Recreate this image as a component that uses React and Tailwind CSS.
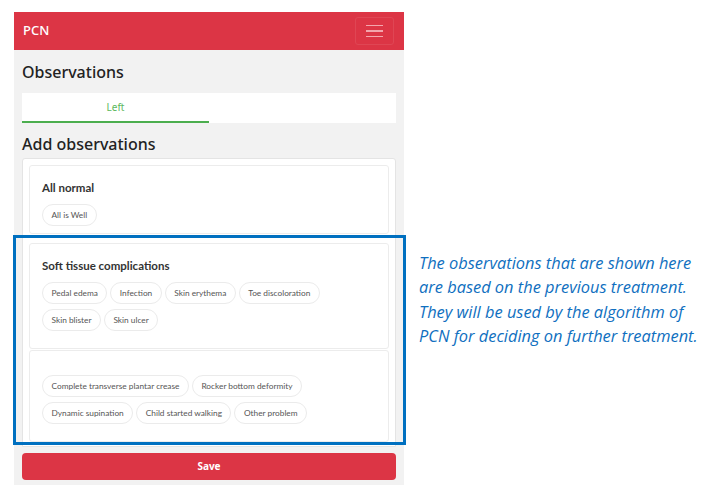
import { useState } from "react";

const groups = [
  { title: "All normal", items: ["All is Well"] },
  {
    title: "Soft tissue complications",
    items: [
      "Pedal edema",
      "Infection",
      "Skin erythema",
      "Toe discoloration",
      "Skin blister",
      "Skin ulcer",
    ],
  },
  {
    title: "",
    items: [
      "Complete transverse plantar crease",
      "Rocker bottom deformity",
      "Dynamic supination",
      "Child started walking",
      "Other problem",
    ],
  },
];

function Chip({ label, selected, onClick }) {
  return (
    <button
      onClick={onClick}
      className={`h-[22px] px-[8.5px] rounded-full border text-[8.3px] leading-none ${
        selected
          ? "border-[#dc3545] text-[#dc3545]"
          : "border-[#ebebeb] text-[#555]"
      }`}
    >
      {label}
    </button>
  );
}

function App() {
  const [picked, setPicked] = useState([]);

  const toggle = (item) => {
    setPicked((prev) =>
      prev.includes(item) ? prev.filter((p) => p !== item) : [...prev, item]
    );
  };

  return (
    <div
      className="relative w-[726px] h-[494px] bg-white flex"
      style={{ fontFamily: '"Noto Sans", "Open Sans", sans-serif' }}
    >
      {/* Phone screen */}
      <div className="ml-[14px] mt-[12px] w-[390px] h-[473px] bg-[#f2f2f2] flex flex-col">
        <header className="h-[38px] bg-[#dc3545] flex items-center justify-between pl-[9px] pr-[10px]">
          <span className="text-white text-[13px] font-medium">PCN</span>
          <button className="w-[39px] h-[28px] border border-[#df4654] rounded-[3px] flex flex-col items-center justify-center gap-[4px]">
            <span className="block w-[17px] h-[1.5px] bg-[#f3a6ad]" />
            <span className="block w-[17px] h-[1.5px] bg-[#f3a6ad]" />
            <span className="block w-[17px] h-[1.5px] bg-[#f3a6ad]" />
          </button>
        </header>

        <div className="flex-1 flex flex-col px-[8px]">
          <h2 className="mt-[11px] h-[22px] leading-[22px] text-[16px] font-medium text-[#222]">
            Observations
          </h2>

          <div className="mt-[10px] h-[30px] bg-white flex">
            <button className="w-1/2 h-full border-b-2 border-[#4cae4f] text-[10px] text-[#5cb85c]">
              Left
            </button>
          </div>

          <h2 className="mt-[10px] h-[22px] leading-[22px] text-[16px] font-medium text-[#222]">
            Add observations
          </h2>

          <div
            className="mt-[3px] h-[289px] overflow-hidden bg-white border border-[#e4e4e4] rounded-t-[3px] px-[6px] pt-[6px]"
            style={{ fontFamily: "Lato, sans-serif" }}
          >
            {groups.map((g, i) => (
              <div
                key={i}
                className={`border border-[#ececec] rounded-[3px] px-[12px] ${
                  i === 0
                    ? "pt-[14px] pb-[7px] mb-[9px]"
                    : g.title
                    ? "pt-[14px] pb-[17px] mb-[1px]"
                    : "pt-[24px] pb-[17px]"
                }`}
              >
                {g.title && (
                  <div className="h-[15px] mb-[9px] leading-[15px] text-[11.5px] font-bold text-[#333]">
                    {g.title}
                  </div>
                )}
                <div className="flex flex-wrap gap-x-[3px] gap-y-[5px]">
                  {g.items.map((item) => (
                    <Chip
                      key={item}
                      label={item}
                      selected={picked.includes(item)}
                      onClick={() => toggle(item)}
                    />
                  ))}
                </div>
              </div>
            ))}
          </div>

          <button className="mt-[6px] h-[27px] rounded-[4px] bg-[#dc3545] text-white text-[10px] font-bold">
            Save
          </button>
        </div>
      </div>

      {/* Note */}
      <p
        className="ml-[15px] mt-[251px] text-[16.4px] leading-[24.4px] italic text-[#0f6fc0]"
        style={{ fontFamily: '"Open Sans", sans-serif' }}
      >
        The observations that are shown here
        <br />
        are based on the previous treatment.
        <br />
        They will be used by the algorithm of
        <br />
        PCN for deciding on further treatment.
      </p>

      {/* Highlight box */}
      <div className="absolute left-[13px] top-[235px] w-[393px] h-[210px] border-[3px] border-[#0070c0] pointer-events-none" />
    </div>
  );
}

export default App;
